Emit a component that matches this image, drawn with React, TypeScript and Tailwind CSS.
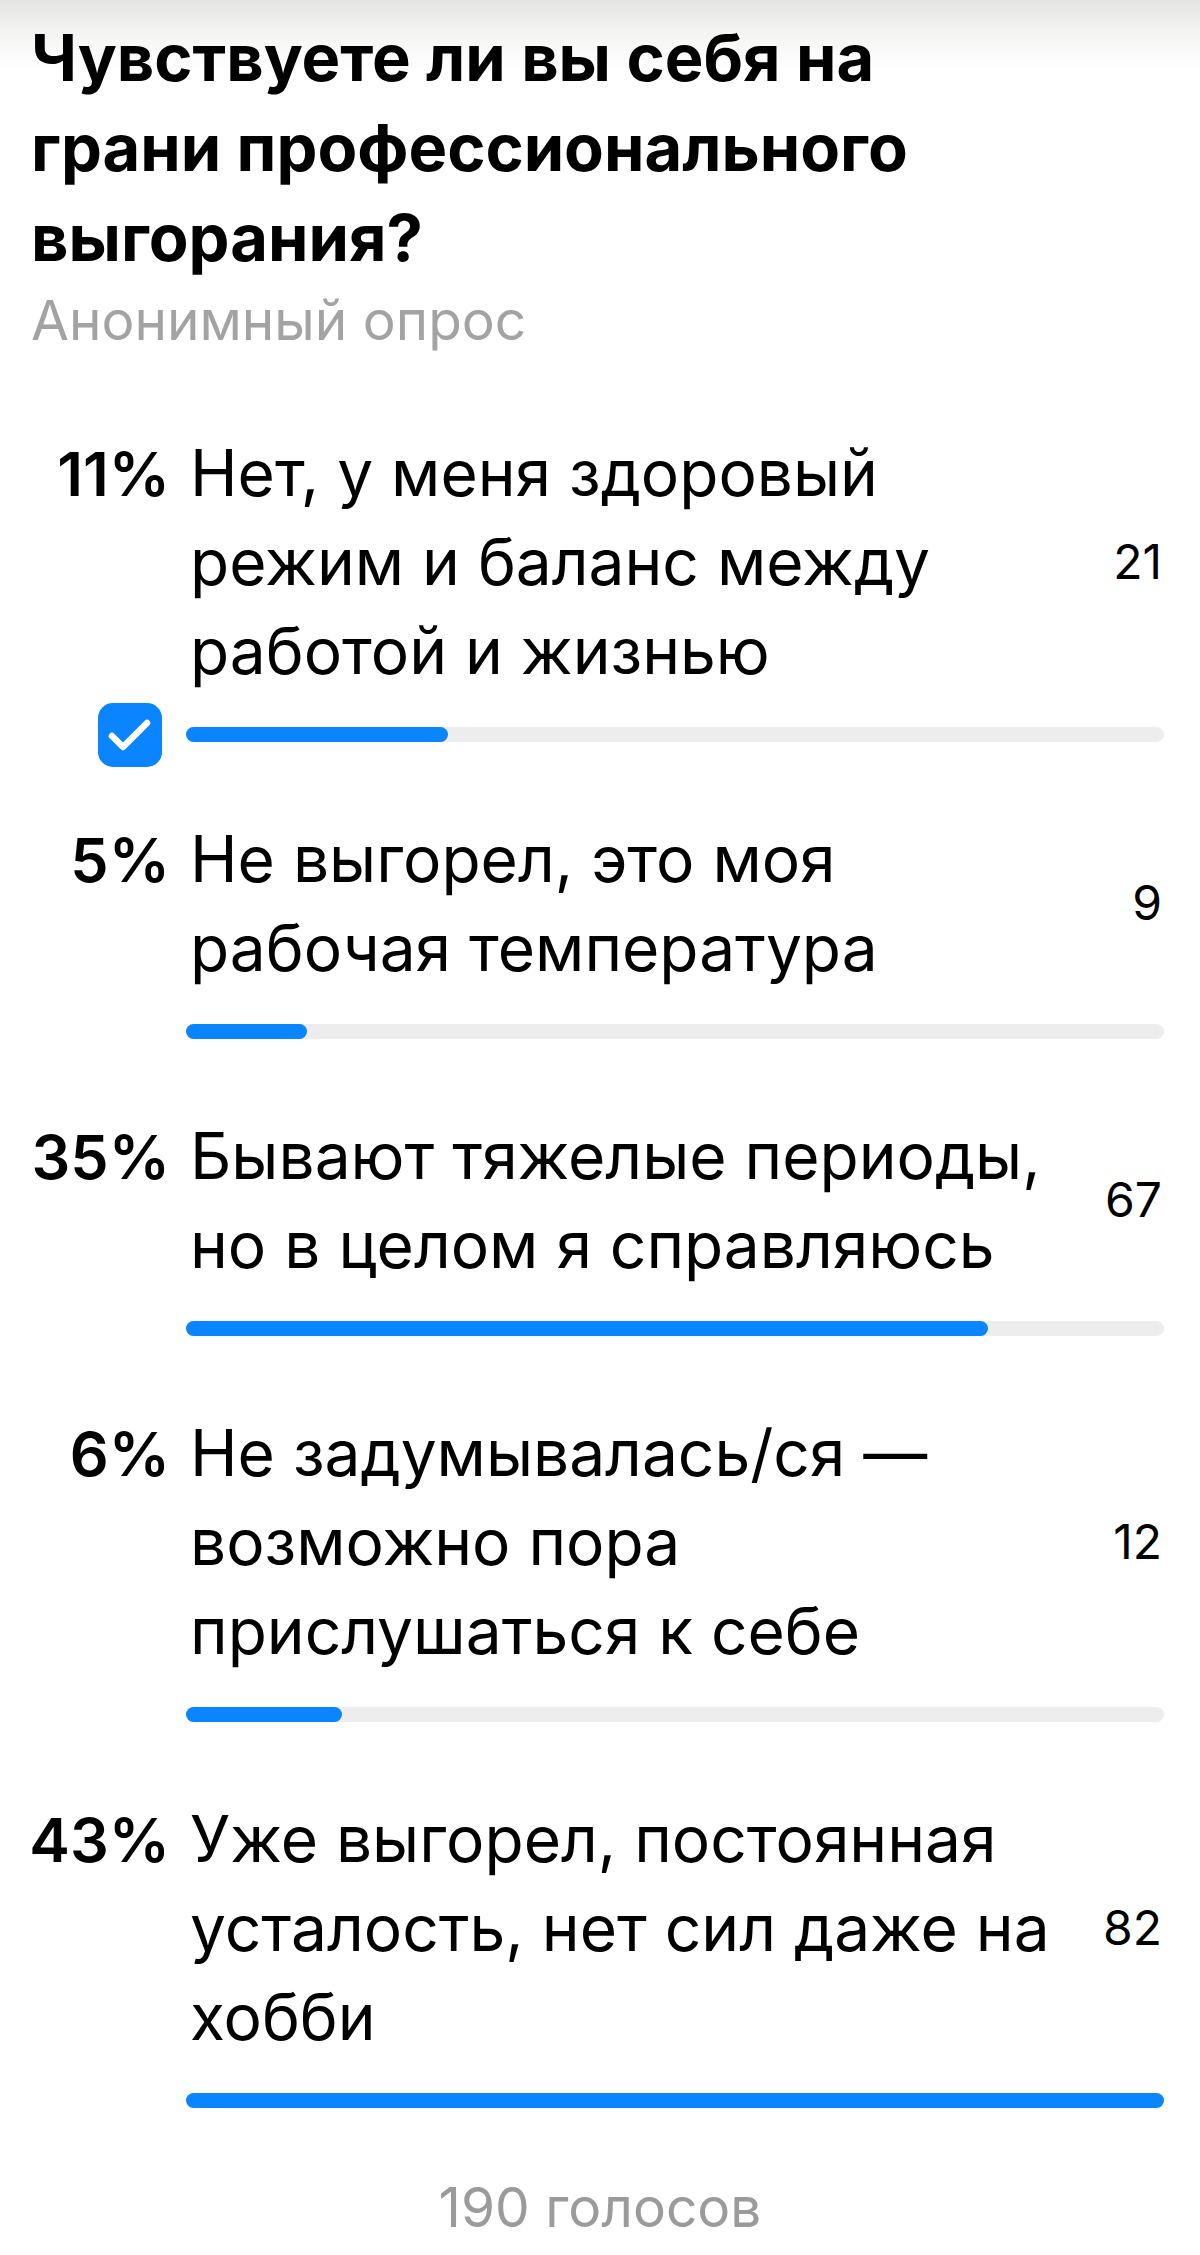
import React from "react";

type Opt = { pct: string; votes: number; lines: string[]; checked?: boolean };

const MAX = 82;
const TRACK = 978;

const options: Opt[] = [
  { pct: "11%", votes: 21, lines: ["Нет, у меня здоровый", "режим и баланс между", "работой и жизнью"], checked: true },
  { pct: "5%", votes: 9, lines: ["Не выгорел, это моя", "рабочая температура"] },
  { pct: "35%", votes: 67, lines: ["Бывают тяжелые периоды,", "но в целом я справляюсь"] },
  { pct: "6%", votes: 12, lines: ["Не задумывалась/ся —", "возможно пора", "прислушаться к себе"] },
  { pct: "43%", votes: 82, lines: ["Уже выгорел, постоянная", "усталость, нет сил даже на", "хобби"] },
];

function Check() {
  return (
    <div className="flex h-[64px] w-[64px] shrink-0 items-center justify-center rounded-[15px] bg-[#0a84ff]">
      <svg width="64" height="64" viewBox="0 0 64 64" fill="none">
        <path d="M14 33 L25 44 L49 20" stroke="#ffffff" strokeWidth="6.5" strokeLinecap="round" strokeLinejoin="round" />
      </svg>
    </div>
  );
}

function Option({ o, first }: { o: Opt; first: boolean }) {
  const w = o.votes >= MAX ? TRACK : Math.round(15 + (o.votes / MAX) * (TRACK - 15));
  return (
    <div className={first ? "" : "mt-[72px]"}>
      <div className="flex items-baseline pr-[38px]">
        <div className="w-[170px] shrink-0 text-right text-[61px] font-semibold leading-[89px]">{o.pct}</div>
        <div className="ml-[20px] flex-1 whitespace-nowrap text-[64px] leading-[89px]">
          {o.lines.map((l, i) => (
            <div key={i}>{l}</div>
          ))}
        </div>
        <div className="self-center text-[48px] leading-none">{o.votes}</div>
      </div>
      <div className="mt-[32px] flex h-[15px] items-center pr-[36px]">
        <div className="flex w-[186px] shrink-0 justify-end pr-[24px]">{o.checked ? <Check /> : null}</div>
        <div className="h-[15px] flex-1 rounded-full bg-[#ededed]">
          <div className="h-full rounded-full bg-[#0a84ff]" style={{ width: `${w}px` }} />
        </div>
      </div>
    </div>
  );
}

export default function App() {
  return (
    <div className="min-h-[2255px] w-full bg-white bg-[linear-gradient(to_bottom,#e4e4e2_0px,#f4f4f3_30px,#ffffff_70px)] font-['Inter','Noto_Sans',sans-serif] text-black">
      <div className="pl-[31px] pt-[13px]">
        <h1 className="text-[65px] font-bold leading-[90px]">
          <div>Чувствуете ли вы себя на</div>
          <div>грани профессионального</div>
          <div>выгорания?</div>
        </h1>
        <div className="mt-[5px] text-[55px] leading-[64px] text-[#a3a3a3]">Анонимный опрос</div>
      </div>
      <div className="mt-[76px]">
        {options.map((o, i) => (
          <Option key={i} o={o} first={i === 0} />
        ))}
      </div>
      <div className="mt-[67px] text-center text-[55px] leading-[64px] text-[#9b9b9b]">190 голосов</div>
    </div>
  );
}
